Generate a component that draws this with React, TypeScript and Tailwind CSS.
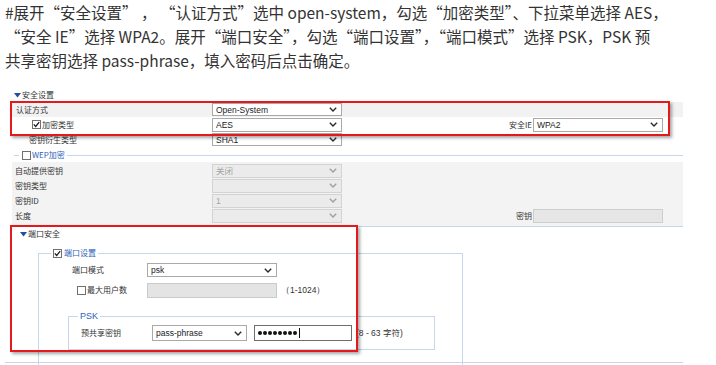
import React from "react";

const Chevron = ({ muted = false }: { muted?: boolean }) => (
  <svg width="8" height="5" viewBox="0 0 8 5" className="shrink-0">
    <polyline
      points="0.8,0.8 4,4 7.2,0.8"
      fill="none"
      stroke={muted ? "#a0a0a0" : "#2a2a2a"}
      strokeWidth="1.4"
    />
  </svg>
);

const Tri = () => (
  <svg width="7" height="5" viewBox="0 0 7 5" className="shrink-0">
    <polygon points="0,0 7,0 3.5,4.5" fill="#1f4f9f" />
  </svg>
);

const Check = ({ checked = false }: { checked?: boolean }) => (
  <span className="inline-flex w-[9px] h-[9px] shrink-0 items-center justify-center border border-[#707070] bg-white">
    {checked && (
      <svg width="7" height="7" viewBox="0 0 7 7">
        <polyline points="0.8,3.4 2.7,5.4 6.2,1.2" fill="none" stroke="#1a1a1a" strokeWidth="1.3" />
      </svg>
    )}
  </span>
);

function Select({
  value = "",
  className,
  disabled = false,
}: {
  value?: string;
  className: string;
  disabled?: boolean;
}) {
  return (
    <div
      className={`${className} flex shrink-0 items-center justify-between border pl-[3px] pr-[4px] font-['Liberation_Sans','Noto_Sans_CJK_SC',sans-serif] text-[8.5px] ${
        disabled ? "border-[#d3d3d3] bg-[#ebebeb] text-[#a3a3a3]" : "border-[#a9a9a9] bg-white text-[#222]"
      }`}
    >
      <span>{value}</span>
      <Chevron muted={disabled} />
    </div>
  );
}

export default function App() {
  return (
    <div className="relative w-[716px] h-[365px] overflow-hidden bg-white">
      {/* instruction text */}
      <div className="pl-[5px] whitespace-pre text-[15.5px] leading-[24px] text-[#333] font-['Noto_Sans_CJK_SC',sans-serif]">
        <div>#展开“安全设置” ， “认证方式”选中 open-system，勾选“加密类型”、下拉菜单选择 AES，</div>
        <div>“安全 IE”选择 WPA2。展开“端口安全”，勾选“端口设置”，“端口模式”选择 PSK，PSK 预</div>
        <div>共享密钥选择 pass-phrase，填入密码后点击确定。</div>
      </div>

      {/* screenshot panel */}
      <div className="ml-[5px] mt-[16px] w-[678px] text-[8px] leading-[10px] text-[#333] font-['Noto_Sans_CJK_SC','Liberation_Sans',sans-serif]">
        <div className="flex h-[14px] items-center gap-[1px] pl-[9px]">
          <Tri />
          <span>安全设置</span>
        </div>

        <div className="pl-[7px]">
          {/* 认证方式 */}
          <div className="flex h-[15px] items-center bg-[#f2f2f2]">
            <div className="w-[200px] pl-[4px]">认证方式</div>
            <Select value="Open-System" className="w-[130px] h-[13px]" />
          </div>
          {/* 加密类型 */}
          <div className="flex h-[15px] items-center">
            <div className="flex w-[200px] items-center gap-[1px] pl-[20px]">
              <Check checked />
              <span>加密类型</span>
            </div>
            <Select value="AES" className="w-[130px] h-[14px]" />
            <div className="flex-1" />
            <span className="mr-[1px]">安全IE</span>
            <Select value="WPA2" className="w-[130px] h-[14px]" />
            <div className="w-[20px]" />
          </div>
          {/* 密钥衍生类型 */}
          <div className="flex h-[15px] items-center">
            <div className="w-[200px] pl-[17px]">密钥衍生类型</div>
            <Select value="SHA1" className="w-[130px] h-[13px]" />
          </div>

          {/* WEP legend */}
          <div className="mt-[1px] flex h-[14px] items-center">
            <div className="ml-[2px] h-px w-[5px] bg-[#c6d6ec]" />
            <div className="ml-[3px] flex items-center gap-[1px]">
              <Check />
              <span className="text-[#2d62b8]">WEP加密</span>
            </div>
            <div className="ml-[2px] h-px flex-1 bg-[#c6d6ec]" />
          </div>

          {/* WEP rows */}
          <div className="bg-[#f3f3f3] pt-[1px] pb-[3px]">
            <div className="flex h-[15px] items-center">
              <div className="w-[200px] pl-[3px]">自动提供密钥</div>
              <Select value="关闭" disabled className="w-[130px] h-[14px]" />
            </div>
            <div className="flex h-[15px] items-center">
              <div className="w-[200px] pl-[3px]">密钥类型</div>
              <Select disabled className="w-[130px] h-[14px]" />
            </div>
            <div className="flex h-[15px] items-center">
              <div className="w-[200px] pl-[3px]">密钥ID</div>
              <Select value="1" disabled className="w-[130px] h-[14px]" />
            </div>
            <div className="flex h-[15px] items-center">
              <div className="w-[200px] pl-[3px]">长度</div>
              <Select disabled className="w-[130px] h-[14px]" />
              <div className="flex-1" />
              <span className="mr-[1px]">密钥</span>
              <div className="h-[14px] w-[130px] border border-[#cdcdcd] bg-[#e6e6e6]" />
              <div className="w-[20px]" />
            </div>
          </div>
          <div className="h-px bg-[#c6d6ec]" />

          {/* 端口安全 */}
          <div className="flex h-[14px] items-center gap-[1px] pl-[8px]">
            <Tri />
            <span>端口安全</span>
          </div>

          <fieldset className="ml-[26px] mt-[5px] w-[425px] border border-[#c6d6ec] pb-[30px]">
            <legend className="ml-[12px] px-[2px]">
              <div className="flex h-[14px] items-center gap-[2px]">
                <Check checked />
                <span className="text-[#2d62b8]">端口设置</span>
              </div>
            </legend>

            <div className="mt-[3px] flex h-[14px] items-center">
              <div className="w-[108px] pl-[33px]">端口模式</div>
              <Select value="psk" className="w-[130px] h-[14px]" />
            </div>

            <div className="mt-[6px] flex h-[14px] items-center">
              <div className="flex w-[108px] items-center gap-[1px] pl-[38px]">
                <Check />
                <span>最大用户数</span>
              </div>
              <div className="h-[15px] w-[130px] border border-[#cbcbcb] bg-[#e4e4e4]" />
              <span className="ml-[4px] font-['Liberation_Sans',sans-serif] text-[8.5px]">（1-1024）</span>
            </div>

            <fieldset className="ml-[29px] mt-[13px] w-[367px] border border-[#c6d6ec] pb-[8px]">
              <legend className="ml-[9px] px-[2px]">
                <div className="flex h-[12px] items-center font-['Liberation_Sans',sans-serif] text-[9px] text-[#2d62b8]">
                  PSK
                </div>
              </legend>
              <div className="mt-[3px] flex h-[16px] items-center">
                <div className="w-[83px] pl-[12px]">预共享密钥</div>
                <Select value="pass-phrase" className="w-[95px] h-[16px]" />
                <div className="ml-[7px] flex h-[16px] w-[98px] items-center gap-[1px] border border-[#6f6f6f] bg-white pl-[3px]">
                  <span className="h-[4px] w-[4px] rounded-full bg-[#111]" />
                  <span className="h-[4px] w-[4px] rounded-full bg-[#111]" />
                  <span className="h-[4px] w-[4px] rounded-full bg-[#111]" />
                  <span className="h-[4px] w-[4px] rounded-full bg-[#111]" />
                  <span className="h-[4px] w-[4px] rounded-full bg-[#111]" />
                  <span className="h-[4px] w-[4px] rounded-full bg-[#111]" />
                  <span className="h-[4px] w-[4px] rounded-full bg-[#111]" />
                  <span className="h-[4px] w-[4px] rounded-full bg-[#111]" />
                  <span className="ml-[1px] h-[10px] w-px bg-[#111]" />
                </div>
                <span className="ml-[4px] whitespace-nowrap font-['Liberation_Sans','Noto_Sans_CJK_SC',sans-serif] text-[8.5px]">
                  (8 - 63 字符)
                </span>
              </div>
            </fieldset>
          </fieldset>
        </div>
      </div>

      {/* bottom separator line over the fieldset */}
      <div className="absolute left-[5px] top-[362px] h-px w-[678px] bg-[#c6d6ec]" />

      {/* red annotation boxes */}
      <div className="absolute left-[10px] top-[101px] h-[35px] w-[660px] border-2 border-[#e3191b] shadow-[2px_2px_3px_rgba(0,0,0,0.35)]" />
      <div className="absolute left-[10px] top-[225px] h-[127px] w-[348px] border-2 border-[#e3191b] shadow-[2px_2px_3px_rgba(0,0,0,0.35)]" />
    </div>
  );
}
